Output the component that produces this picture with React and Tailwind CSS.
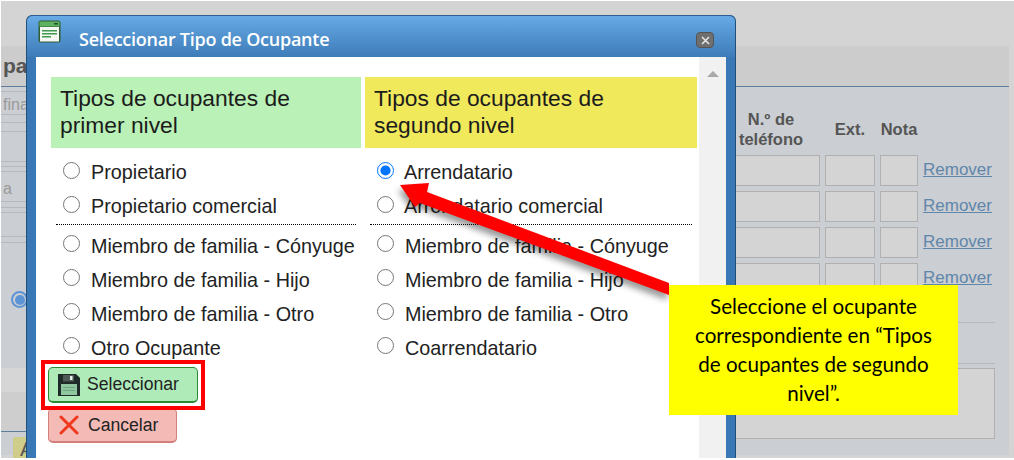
import React from "react";

const rowsLeftTop = ["Propietario", "Propietario comercial"];
const rowsLeftBottom = ["Miembro de familia - Cónyuge", "Miembro de familia - Hijo", "Miembro de familia - Otro", "Otro Ocupante"];
const rowsRightTop = ["Arrendatario", "Arrendatario comercial"];
const rowsRightBottom = ["Miembro de familia - Cónyuge", "Miembro de familia - Hijo", "Miembro de familia - Otro", "Coarrendatario"];

const WindowIcon = () => (
    <svg width="24" height="24" viewBox="0 0 24 24" className="shrink-0">
        <rect x="0.5" y="0.5" width="22" height="22" rx="2" fill="#2f5f33" />
        <rect x="1.5" y="1.5" width="20" height="5" fill="#5fb25f" />
        <rect x="2" y="7" width="19" height="14.5" fill="#f4f7f2" />
        <rect x="16" y="3" width="4" height="1.5" fill="#1f4f24" />
        <rect x="4" y="10" width="15" height="1.5" fill="#3f9a4f" />
        <rect x="4" y="13" width="15" height="1.5" fill="#3f9a4f" />
        <rect x="4" y="16" width="9" height="1.5" fill="#3f9a4f" />
    </svg>
);

const FloppyIcon = () => (
    <svg width="24" height="24" viewBox="0 0 24 24" className="shrink-0">
        <path d="M1 1h18l4 4v18H1z" fill="#1f2b28" />
        <rect x="6" y="2" width="11" height="6.5" fill="#4d5a55" />
        <rect x="13" y="3" width="2.5" height="4" fill="#e8efe9" />
        <rect x="4" y="11" width="16" height="11" fill="#8fc7a0" />
        <rect x="6" y="14" width="12" height="1" fill="#6da883" />
        <rect x="6" y="17" width="12" height="1" fill="#6da883" />
    </svg>
);

const CrossIcon = () => (
    <svg width="20" height="20" viewBox="0 0 20 20" className="shrink-0">
        <path d="M2 2L18 18M18 2L2 18" stroke="#f0381c" strokeWidth="3" strokeLinecap="round" />
    </svg>
);

const Arrow = () => (
    <svg width="300" height="130" viewBox="0 0 300 130" className="absolute left-[390px] top-[175px] overflow-visible drop-shadow-[-2px_5px_3px_rgba(0,0,0,0.4)]">
        <path d="M10 10L39 8L37 17L279 108L279 120L30 28L25 32Z" fill="#ff0000" />
    </svg>
);

const Radio = ({ label, checked, textClass, radioClass }) => (
    <label className="flex h-[34px] items-center">
        <input type="radio" readOnly checked={!!checked} className={`w-[17px] h-[17px] m-0 shrink-0 ${radioClass}`} />
        <span className={`text-[19.8px] text-[#222222] whitespace-nowrap ${textClass}`}>{label}</span>
    </label>
);

const Column = ({ title, color, top, bottom, checkedTop, width, textTopClass }) => (
    <div style={{ width }} className="shrink-0">
        <div className={`h-[71px] px-[9px] pt-[8px] text-[22.8px] leading-[27px] text-[#1c1c1c] ${color}`}>{title}</div>
        <div className="pl-[12px] pt-[8px]">
            {top.map((r, i) => (
                <Radio key={r} label={r} checked={checkedTop === i} textClass={textTopClass} radioClass="mb-[6px]" />
            ))}
        </div>
        <div className="mx-[5px] mb-[5px] border-t border-dotted border-black" />
        <div className="pl-[12px]">
            {bottom.map((r) => (
                <Radio key={r} label={r} textClass="ml-[11px]" radioClass="mb-[7px]" />
            ))}
        </div>
    </div>
);

const Modal = () => (
    <div className="absolute left-[27px] top-[15px] w-[708px] h-[443px] flex flex-col rounded-t-[6px] border-x-[9px] border-[#3a78b5] bg-[#3a78b5] shadow-[-1px_0_0_#1f4f7a,1px_0_0_#1f4f7a] [font-family:'Liberation_Sans',Arial,sans-serif]">
        <div className="h-[42px] -mx-[9px] rounded-t-[6px] border-t border-[#2d5f92] bg-gradient-to-b from-[#67aae5] to-[#3d7cb8] flex items-start relative">
            <div className="absolute left-[11px] top-[4px]"><WindowIcon /></div>
            <span className="ml-[52px] mt-[10px] text-[18px] font-semibold text-white [font-family:'Open_Sans',sans-serif] tracking-[-0.25px] whitespace-nowrap">Seleccionar Tipo de Ocupante</span>
            <div className="absolute right-[21px] top-[16px] w-[18px] h-[16px] rounded-[4px] bg-[#6f6f6f] border border-[#555555] flex items-center justify-center">
                <svg width="9" height="9" viewBox="0 0 9 9"><path d="M1 1L8 8M8 1L1 8" stroke="#e8e8e8" strokeWidth="1.5" /></svg>
            </div>
        </div>
        <div className="flex-1 flex bg-white overflow-hidden">
            <div className="flex-1 pl-[15px] pt-[20px]">
                <div className="flex gap-[4px]">
                    <Column title="Tipos de ocupantes de primer nivel" color="bg-[#baf1b7]" top={rowsLeftTop} bottom={rowsLeftBottom} width={310} textTopClass="ml-[11px]" />
                    <Column title="Tipos de ocupantes de segundo nivel" color="bg-[#f0e95c]" top={rowsRightTop} bottom={rowsRightBottom} checkedTop={0} width={332} textTopClass="ml-[10px]" />
                </div>
                <div className="-ml-[3px] flex flex-col items-start gap-[5px] mt-[1px]">
                    <button className="w-[150px] h-[36px] flex items-center gap-[6px] pl-[8px] rounded-[5px] border border-[#2b8a34] border-b-2 bg-[#aeebb9] text-[17.6px] text-[#222222]">
                        <FloppyIcon />Seleccionar
                    </button>
                    <button className="w-[129px] h-[35px] flex items-center gap-[9px] pl-[10px] rounded-[5px] border border-[#d27e7a] border-b-2 bg-[#f3bab6] text-[17.6px] text-[#222222]">
                        <CrossIcon />Cancelar
                    </button>
                </div>
            </div>
            <div className="w-[27px] shrink-0 bg-[#f1f1f1] flex justify-center pt-[14px]">
                <div className="w-0 h-0 border-x-[6px] border-x-transparent border-b-[6px] border-b-[#a9a9a9]" />
            </div>
        </div>
    </div>
);

const TableRow = () => (
    <div className="flex items-center h-[31px]">
        <div className="w-[90px] h-[31px] border border-[#b0b0b0] bg-[#d4d4d4]" />
        <div className="w-[50px] h-[31px] ml-[5px] border border-[#b0b0b0] bg-[#d4d4d4]" />
        <div className="w-[38px] h-[31px] ml-[5px] border border-[#b0b0b0] bg-[#d4d4d4]" />
        <span className="ml-[5px] -mt-[2px] text-[17px] text-[#5f86ab] underline">Remover</span>
    </div>
);

// bit of the page that peeks out left of the modal
const LeftStrip = () => (
    <div className="w-[26px] h-full shrink-0 flex flex-col text-[#9a9a9a] text-[16px]">
        <div className="h-[5px] shrink-0 border-b border-[#b5b8bc]" />
        <div className="h-[23px] shrink-0 pl-[2px] border-b border-[#b5b8bc] leading-[26px] whitespace-nowrap">fina</div>
        <div className="h-[8px] shrink-0 border-b border-[#b5b8bc]" />
        <div className="h-[9px] shrink-0 border-b border-[#b5b8bc]" />
        <div className="h-[30px] shrink-0 border-b border-[#b5b8bc]" />
        <div className="h-[5px] shrink-0 border-b border-[#b5b8bc]" />
        <div className="h-[5px] shrink-0 border-b border-[#b5b8bc]" />
        <div className="h-[30px] shrink-0 border-b border-[#b5b8bc] leading-[34px] pl-[2px] whitespace-nowrap">a</div>
        <div className="h-[6px] shrink-0 border-b border-[#b5b8bc]" />
        <div className="h-[5px] shrink-0 border-b border-[#b5b8bc]" />
        <div className="h-[24px] shrink-0 border-b border-[#b5b8bc]" />
        <div className="h-[6px] shrink-0 border-b border-[#b5b8bc]" />
        <div className="h-[48px] shrink-0" />
        <div className="h-[17px] shrink-0 flex justify-end">
            <div className="w-[17px] h-[17px] -mr-[1px] rounded-full border-2 border-[#5d94d6] flex items-center justify-center shrink-0">
                <div className="w-[10px] h-[10px] rounded-full bg-[#5d94d6]" />
            </div>
        </div>
        <div className="h-[60px] shrink-0" />
        <div className="h-[24px] shrink-0 bg-[#d6d6d6]" />
        <div className="h-[40px] shrink-0 bg-[#cecece] border-b-[1.5px] border-[#5d7d9d]" />
        <div className="h-[23px] shrink-0 pt-[5px] pl-[12px]">
            <div className="h-[21px] bg-[#d0cd8a] pl-[7px] text-[20px] text-[#555555] leading-[24px]">A</div>
        </div>
    </div>
);

const Background = () => (
    <div className="h-[457px] pt-[45px] pr-[5px] pb-[3px] bg-[#d4d4d4] [font-family:'Liberation_Sans',Arial,sans-serif]">
        <div className="h-full bg-[#cbced2] flex flex-col">
            <div className="h-[41px] shrink-0 bg-[#cccccc] border-b-[1.5px] border-[#5d7d9d] pl-[2px] text-[21px] font-bold text-[#555555] pt-[9px] leading-[22px]">par</div>
            <div className="flex-1 min-h-0 flex justify-between">
                <LeftStrip />
                <div className="pr-[14px] pt-[21px] w-[300px] flex flex-col items-start shrink-0">
                    <div className="flex items-end text-[16.5px] font-bold text-[#555555] leading-[20px] h-[47px] pl-[22px]">
                        <div className="w-[80px] pb-[6px] text-center whitespace-nowrap">N.º de<br />teléfono</div>
                        <div className="w-[50px] ml-[14px] text-center pb-[16px]">Ext.</div>
                        <div className="w-[38px] ml-[5px] text-center pb-[16px] whitespace-nowrap">Nota</div>
                    </div>
                    <div className="flex flex-col gap-[5px] pl-[21px]">
                        <TableRow /><TableRow /><TableRow /><TableRow />
                    </div>
                    <div className="w-full border-b border-[#b5b8bc] h-[29px]" />
                    <div className="w-full border-b border-[#b5b8bc] h-[41px]" />
                    <div className="w-full mt-[4px] h-[71px] border border-[#b0b0b0] bg-[#d4d4d4]" />
                </div>
            </div>
        </div>
    </div>
);

const App = () => (
    <div className="relative w-[1014px] h-[460px] overflow-hidden bg-white pl-[1px] pt-[1px]">
        <Background />
        <Modal />
        <div className="absolute left-[41px] top-[360px] w-[164px] h-[50px] border-[4px] border-[#ff0000]" />
        <Arrow />
        <div className="absolute left-[669px] top-[285px] w-[289px] h-[130px] bg-[#ffff00] flex items-center justify-center text-center text-[20.6px] leading-[29px] text-black px-[24px] [font-family:Lato,sans-serif]">
            Seleccione el ocupante correspondiente en “Tipos de ocupantes de segundo nivel”.
        </div>
    </div>
);

export default App;
